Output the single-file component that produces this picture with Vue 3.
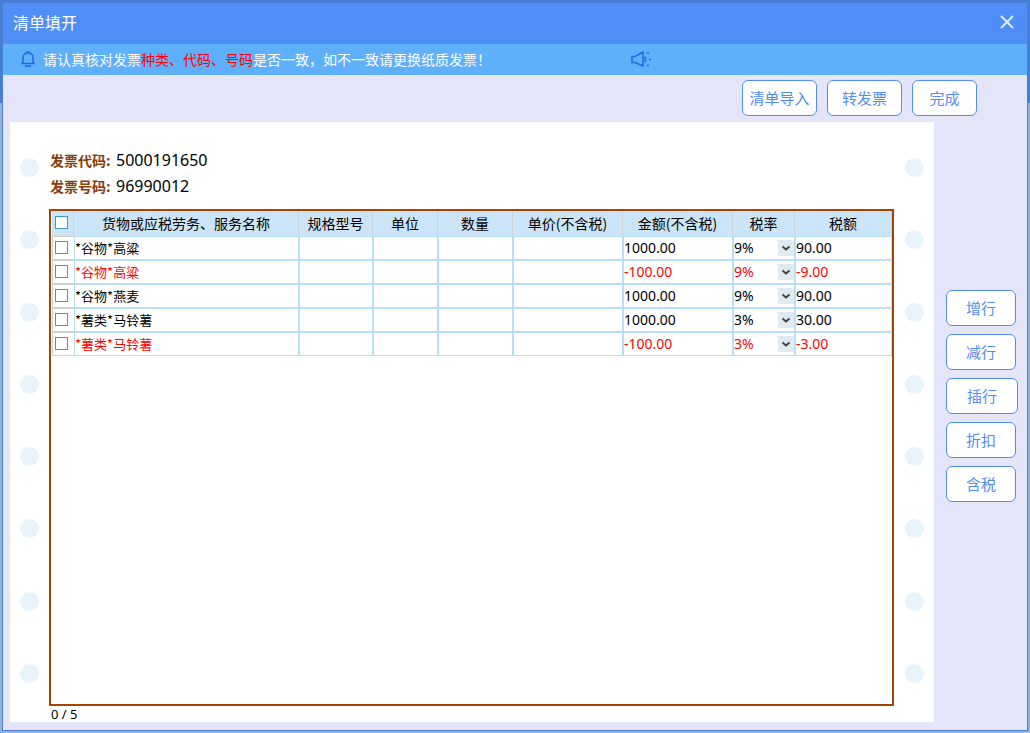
<script setup>
import { ref, computed } from 'vue'

const columns = ['规格型号', '单位', '数量', '单价(不含税)', '金额(不含税)', '税率', '税额']
const rows = ref([
  { name: '*谷物*高粱', amount: '1000.00', rate: '9%', tax: '90.00', checked: false },
  { name: '*谷物*高粱', amount: '-100.00', rate: '9%', tax: '-9.00', discount: true, checked: false },
  { name: '*谷物*燕麦', amount: '1000.00', rate: '9%', tax: '90.00', checked: false },
  { name: '*薯类*马铃薯', amount: '1000.00', rate: '3%', tax: '30.00', checked: false },
  { name: '*薯类*马铃薯', amount: '-100.00', rate: '3%', tax: '-3.00', discount: true, checked: false }
])
const rates = ['3%', '6%', '9%', '13%']
const selected = computed(() => rows.value.filter((r) => r.checked).length)
const allChecked = computed({
  get: () => rows.value.length > 0 && selected.value === rows.value.length,
  set: (v) => rows.value.forEach((r) => { r.checked = v })
})
</script>

<template>
  <div class="backdrop">
    <section class="dialog" aria-labelledby="dialog-title">
      <header class="titlebar">
        <h1 id="dialog-title">清单填开</h1>
        <button class="close" type="button" aria-label="关闭">
          <svg viewBox="0 0 14 14" width="14" height="14"><path d="M1 1 13 13M13 1 1 13" /></svg>
        </button>
      </header>

      <div class="notice">
        <svg class="bell" viewBox="0 0 16 16" width="16" height="16">
          <path d="M1 12.500h14M3 12V6.800C3 3.800 5 2 8 2s5 1.800 5 4.800V12M6.500 1h3M5 15h6" />
        </svg>
        <p>请认真核对发票<em>种类、代码、号码</em>是否一致，如不一致请更换纸质发票！</p>
        <svg class="horn" viewBox="0 0 20 16" width="20" height="16">
          <path d="M1 5.500h3L12 1v14L4 11.500H1zM12.500 6.500h2v3.500h-2" />
          <path class="spark" d="M16 2h2M18 8.500h2M16 14.500h2" />
        </svg>
      </div>

      <nav class="toolbar">
        <button class="action wide" type="button">清单导入</button>
        <button class="action wide" type="button">转发票</button>
        <button class="action" type="button">完成</button>
      </nav>

      <div class="content">
        <main class="paper">
          <div class="holes"><i v-for="n in 8" :key="n"></i></div>
          <div class="sheet">
            <dl class="meta">
              <div><dt>发票代码:</dt><dd>5000191650</dd></div>
              <div><dt>发票号码:</dt><dd>96990012</dd></div>
            </dl>
            <div class="frame">
              <table>
                <colgroup>
                  <col class="c-check"><col><col class="c-spec"><col class="c-unit"><col class="c-qty">
                  <col class="c-money"><col class="c-money"><col class="c-rate"><col class="c-tax">
                </colgroup>
                <thead>
                  <tr>
                    <th class="check-head"><input v-model="allChecked" type="checkbox" aria-label="全选"></th>
                    <th>货物或应税劳务、服务名称</th>
                    <th v-for="c in columns" :key="c">{{ c }}</th>
                  </tr>
                </thead>
                <tbody>
                  <tr v-for="(row, i) in rows" :key="i" :class="{ discount: row.discount }">
                    <td class="check"><input v-model="row.checked" type="checkbox" :aria-label="row.name"></td>
                    <td class="name">{{ row.name }}</td>
                    <td></td>
                    <td></td>
                    <td></td>
                    <td></td>
                    <td>{{ row.amount }}</td>
                    <td>
                      <div class="rate">
                        <select v-model="row.rate" aria-label="税率">
                          <option v-for="r in rates" :key="r">{{ r }}</option>
                        </select>
                        <svg viewBox="0 0 16 16" width="16" height="16"><path d="M4.500 6.500 8 9.500 11.500 6.500" /></svg>
                      </div>
                    </td>
                    <td>{{ row.tax }}</td>
                  </tr>
                </tbody>
              </table>
            </div>
            <p class="count">{{ selected }} / {{ rows.length }}</p>
          </div>
          <div class="holes"><i v-for="n in 8" :key="n"></i></div>
        </main>

        <aside class="side">
          <button class="action" type="button">增行</button>
          <button class="action" type="button">减行</button>
          <button class="action long" type="button">插行</button>
          <button class="action" type="button">折扣</button>
          <button class="action" type="button">含税</button>
        </aside>
      </div>
    </section>
  </div>
</template>

<style>
body { margin: 0; }
</style>

<style scoped>
* { box-sizing: border-box; }
.backdrop {
  min-height: 100vh;
  padding: 2px;
  display: flex;
  background: linear-gradient(#4280d8 103px, #8fb4e4 103px);
  font-family: "Noto Sans CJK SC", sans-serif;
  font-size: 14px;
  color: #000;
}
.dialog {
  flex: 1;
  min-width: 0;
  display: flex;
  flex-direction: column;
  border: 1px solid #4d7ecb;
  background: #e4e5f9;
}
.titlebar {
  height: 41px;
  padding: 0 13px 3px 10px;
  display: flex;
  align-items: center;
  justify-content: space-between;
  background: #4f8df7;
}
h1 { margin: 0; font-size: 16px; font-weight: 400; line-height: 24px; color: #fff; }
.close { display: flex; padding: 0; border: 0; background: none; }
.close svg { fill: none; stroke: #dce9ff; stroke-width: 2; }
.notice {
  height: 31px;
  padding: 0 0 2px 17px;
  display: flex;
  align-items: center;
  background: #5eb0fb;
  color: #fff;
}
.notice p { width: 588px; margin: 0 0 0 7px; line-height: 20px; }
.notice em { font-style: normal; color: #f00; }
.notice svg { fill: none; stroke: #1c6ce8; stroke-width: 1.5; flex: none; }
.toolbar {
  height: 47px;
  padding: 5px 50px 6px 0;
  display: flex;
  justify-content: flex-end;
  gap: 10px;
}
.action {
  width: 65px;
  height: 36px;
  padding: 0 0 2px;
  border: 1px solid #4f8df7;
  border-radius: 6px;
  background: #fff;
  color: #4f8df7;
  font-family: inherit;
  font-size: 15px;
}
.action.wide { width: 75px; }
.content { flex: 1; display: flex; padding: 0 9px 8px 7px; }
.paper { flex: 1; min-width: 0; display: flex; background: #fff; }
.holes {
  width: 39px;
  padding: 36px 0 39px;
  display: flex;
  flex-direction: column;
  align-items: center;
  justify-content: space-between;
}
.holes i { width: 19px; height: 19px; border-radius: 50%; background: #e8f4fc; }
.sheet { flex: 1; min-width: 0; padding: 25px 1px 0 0; display: flex; flex-direction: column; }
.meta { margin: 0 0 10px; padding-left: 1px; }
.meta div { display: flex; align-items: center; height: 26px; }
.meta dt { width: 66px; font-weight: 700; color: #8b3a0a; }
.meta dd { margin: 0; font-family: "Noto Sans", sans-serif; font-size: 16px; }
.frame { flex: 1; padding-left: 1px; border: 2px solid #a84300; }
table { width: 100%; table-layout: fixed; border-collapse: separate; border-spacing: 0; }
.c-check { width: 22px; }
.c-spec { width: 74px; }
.c-unit { width: 65px; }
.c-qty { width: 75px; }
.c-money { width: 110px; }
.c-rate { width: 62px; }
.c-tax { width: 97px; }
th {
  height: 25px;
  padding: 0 0 2px;
  border-right: 1px solid #d0d0d0;
  background: #cce4f7;
  font-weight: 400;
  line-height: 20px;
  white-space: nowrap;
}
td {
  height: 24px;
  padding: 0;
  border: 1px solid #b8dff8;
  font-family: "Noto Sans", sans-serif;
  line-height: 20px;
  white-space: nowrap;
}
.name { font-family: "Noto Sans CJK SC", sans-serif; font-size: 13px; }
.check-head { padding-left: 3px; }
.check { padding: 0 0 1px 2px; border-color: #d0d0d0; border-right: 0; }
.discount td, .discount .rate select { color: #f00; }
input {
  appearance: none;
  display: block;
  width: 13px;
  height: 13px;
  margin: 0;
  border: 1px solid #3f97d0;
  background: #fff;
}
input:checked { background: #3f97d0; }
.rate { display: grid; align-items: center; }
.rate > * { grid-area: 1 / 1; }
.rate select {
  appearance: none;
  width: 100%;
  height: 20px;
  padding: 0;
  border: 0;
  background: none;
  color: #000;
  font: inherit;
}
.rate svg { justify-self: end; background: #dfeaf3; fill: none; stroke: #444; stroke-width: 2; pointer-events: none; }
.count { margin: 0; padding-left: 2px; font-family: "Noto Sans", sans-serif; font-size: 13px; line-height: 16px; }
.side { width: 84px; padding: 168px 0 0 12px; display: flex; flex-direction: column; gap: 8px; }
.side .action { width: 70px; }
.side .long { width: 72px; }
</style>
